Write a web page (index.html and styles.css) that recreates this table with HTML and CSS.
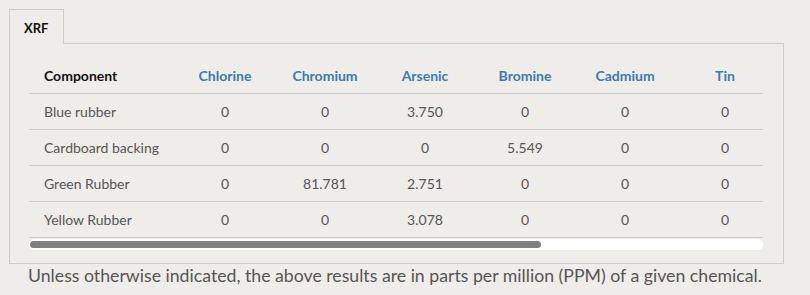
FILE: index.html
```html
<!DOCTYPE html>
<html>
<head>
<meta charset="utf-8">
<link rel="stylesheet" href="styles.css">
</head>
<body>
<div class="tabs">
  <div class="tab">XRF</div>
</div>
<div class="panel">
  <div class="scroller">
    <table class="results">
      <colgroup>
        <col class="c-name"><col class="c-val"><col class="c-val"><col class="c-val"><col class="c-val"><col class="c-val"><col class="c-last">
      </colgroup>
      <thead>
        <tr><th class="name">Component</th><th>Chlorine</th><th>Chromium</th><th>Arsenic</th><th>Bromine</th><th>Cadmium</th><th class="last">Tin</th></tr>
      </thead>
      <tbody>
        <tr><td class="name">Blue rubber</td><td>0</td><td>0</td><td>3.750</td><td>0</td><td>0</td><td class="last">0</td></tr>
        <tr><td class="name">Cardboard backing</td><td>0</td><td>0</td><td>0</td><td>5.549</td><td>0</td><td class="last">0</td></tr>
        <tr><td class="name">Green Rubber</td><td>0</td><td>81.781</td><td>2.751</td><td>0</td><td>0</td><td class="last">0</td></tr>
        <tr><td class="name">Yellow Rubber</td><td>0</td><td>0</td><td>3.078</td><td>0</td><td>0</td><td class="last">0</td></tr>
      </tbody>
    </table>
    <div class="scrollbar"><div class="thumb"></div></div>
  </div>
</div>
<p class="note">Unless otherwise indicated, the above results are in parts per million (PPM) of a given chemical.</p>
</body>
</html>
```
FILE: styles.css
```css
html, body {
  margin: 0;
  padding: 0;
  background: #efede9;
  font-family: Lato, "Liberation Sans", sans-serif;
  color: #555555;
}
body {
  padding: 9px 0 0 9px;
}
.tabs {
  display: flex;
  position: relative;
  z-index: 1;
}
.tab {
  box-sizing: border-box;
  width: 55px;
  height: 35px;
  border: 1px solid #cccccc;
  border-bottom: none;
  background: #efede9;
  padding: 10px 0 0 14px;
  font-size: 13px;
  font-weight: 700;
  color: #111111;
  line-height: 16px;
  margin-bottom: -1px;
}
.panel {
  width: 775px;
  box-sizing: border-box;
  border: 1px solid #cccccc;
  padding: 14px 19px 13px 19px;
}
.scroller {
  width: 734px;
  overflow: hidden;
}
.results {
  table-layout: fixed;
  width: 734px;
  border-collapse: collapse;
  font-size: 14px;
}
.c-name { width: 146px; }
.c-val { width: 100px; }
.c-last { width: 88px; }
.results th {
  height: 35px;
  font-weight: 700;
  color: #3a7bb0;
  text-align: center;
  padding: 0;
  border-bottom: 1px solid #cccccc;
}
.results th.name {
  color: #111111;
  text-align: left;
  padding-left: 15px;
}
.results td {
  height: 35px;
  padding: 0;
  text-align: center;
  border-bottom: 1px solid #cccccc;
}
.results td.name {
  text-align: left;
  padding-left: 15px;
}
.results .last {
  padding-left: 12px;
}
.scrollbar {
  margin-top: 1px;
  height: 11px;
  background: #ffffff;
  border-radius: 6px;
  padding: 2px 0 2px 1px;
  box-sizing: border-box;
}
.thumb {
  width: 511px;
  height: 7px;
  background: #808080;
  border-radius: 4px;
}
.note {
  margin: 0;
  padding: 0 0 0 19px;
  font-size: 17.7px;
  line-height: 24px;
}
```
